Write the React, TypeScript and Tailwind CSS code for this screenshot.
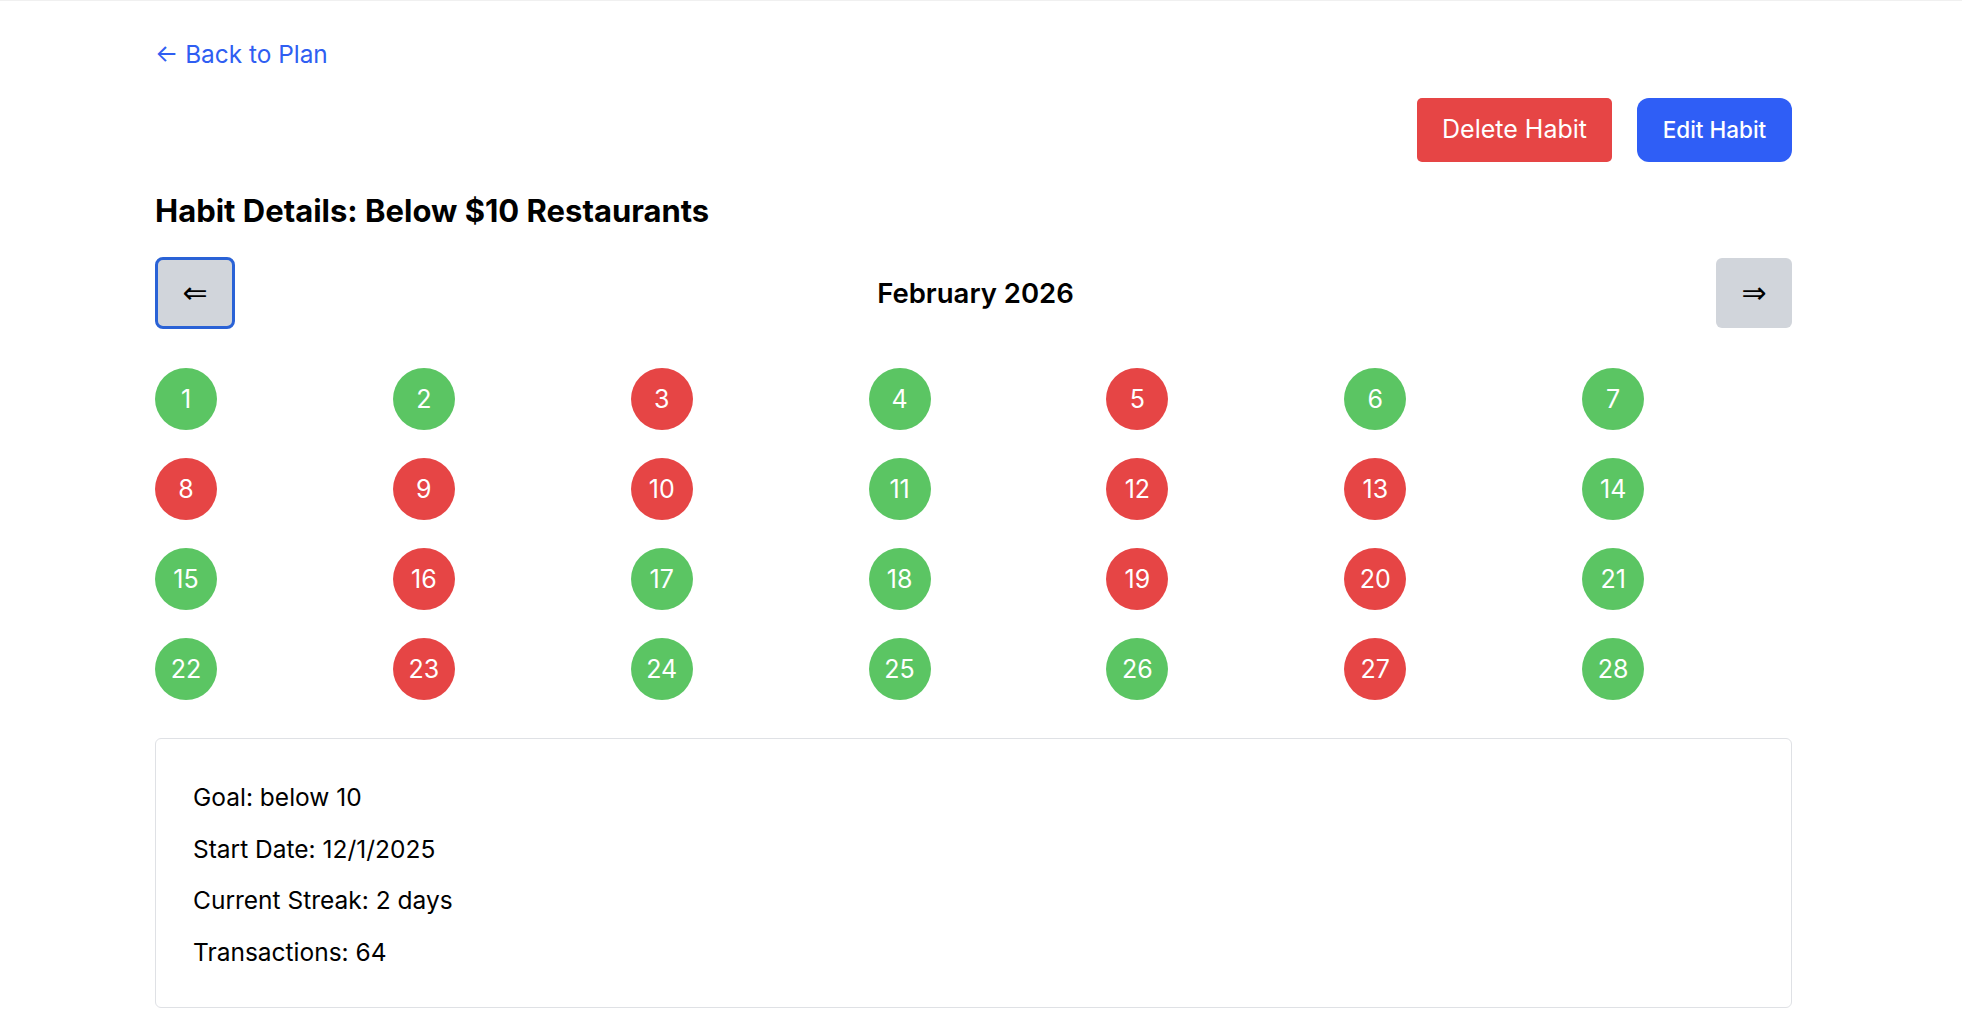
const days: { n: number; ok: boolean }[] = [
  [1, true], [2, true], [3, false], [4, true], [5, false], [6, true], [7, true],
  [8, false], [9, false], [10, false], [11, true], [12, false], [13, false], [14, true],
  [15, true], [16, false], [17, true], [18, true], [19, false], [20, false], [21, true],
  [22, true], [23, false], [24, true], [25, true], [26, true], [27, false], [28, true],
].map(([n, ok]) => ({ n: n as number, ok: ok as boolean }));

const HabitDetails = () => {
  return (
    <div className="min-h-screen border-t border-[#f0f0f0] bg-white font-['Inter','Liberation_Sans',sans-serif] text-black">
      <div className="ml-[155px] w-[1637px]">
        {/* Back link */}
        <div className="pt-[38px]">
          <a href="#" className="text-[24.4px] leading-[30px] text-[#2f5ef2]">
            ← Back to Plan
          </a>
        </div>

        {/* Actions */}
        <div className="mt-[29px] flex justify-end gap-[25px]">
          <button className="h-[64px] w-[195px] rounded-[5px] bg-[#e64545] text-[25px] text-white">
            Delete Habit
          </button>
          <button className="h-[64px] w-[155px] rounded-[12px] bg-[#2f5ef6] text-[22.5px] font-medium text-white">
            Edit Habit
          </button>
        </div>

        {/* Title */}
        <h1 className="mt-[31px] text-[31px] font-bold leading-[36px]">
          Habit Details: Below $10 Restaurants
        </h1>

        {/* Month nav */}
        <div className="mt-[28px] flex h-[72px] items-center justify-between">
          <button className="flex h-[72px] w-[80px] items-center justify-center rounded-[8px] border-[3px] border-[#2a62d6] bg-[#d1d5db] font-['DejaVu_Sans',sans-serif] text-[30px] leading-none">
            ⇐
          </button>
          <h2 className="pt-[2px] text-[27.5px] font-semibold">February 2026</h2>
          <button className="flex h-[70px] w-[76px] items-center justify-center rounded-[6px] bg-[#d1d5db] font-['DejaVu_Sans',sans-serif] text-[30px] leading-none">
            ⇒
          </button>
        </div>

        {/* Calendar */}
        <div className="mt-[39px] grid grid-cols-7 gap-[28px]">
          {days.map((d) => (
            <div key={d.n}>
              <div
                className={
                  "flex h-[62px] w-[62px] items-center justify-center rounded-full pt-[1px] text-[25px] text-white " +
                  (d.ok ? "bg-[#5bc563]" : "bg-[#e64545]")
                }
              >
                {d.n}
              </div>
            </div>
          ))}
        </div>

        {/* Summary card */}
        <div className="mt-[38px] flex h-[270px] flex-col gap-[19.5px] rounded-[6px] border border-[#dfe1e5] pt-[42px] pb-[40px] pl-[37px] text-[24.5px] leading-[32px]">
          <p>Goal: below 10</p>
          <p>Start Date: 12/1/2025</p>
          <p>Current Streak: 2 days</p>
          <p>Transactions: 64</p>
        </div>
      </div>
    </div>
  );
};

export default function App() {
  return <HabitDetails />;
}
